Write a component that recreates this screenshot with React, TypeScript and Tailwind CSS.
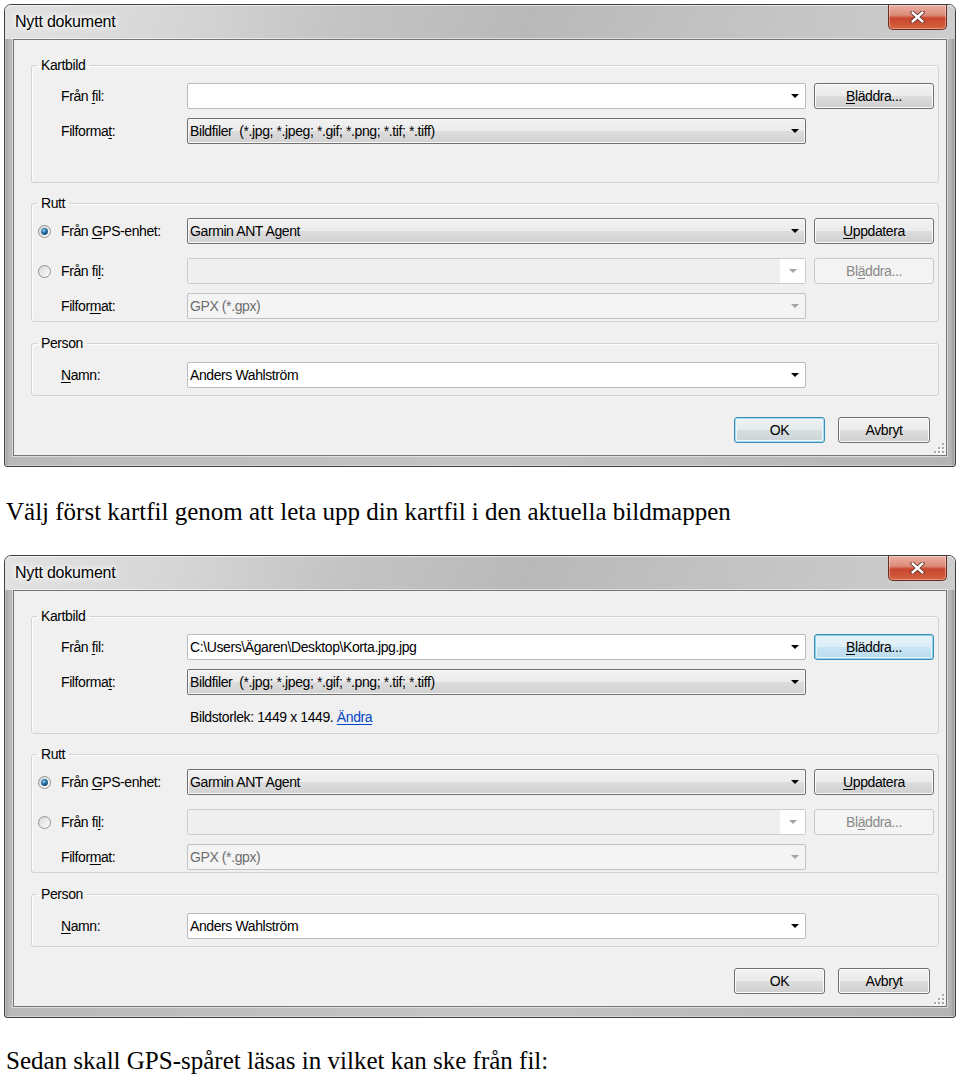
import React, { useId } from 'react';

const UI = "font-['Liberation_Sans',Arial,sans-serif] text-[14px] tracking-[-0.4px] text-black";

const Key: React.FC<{ children: React.ReactNode }> = ({ children }) => (
  <span className="underline decoration-1 underline-offset-[2px]">{children}</span>
);

const Arrow: React.FC<{ disabled?: boolean }> = ({ disabled }) => (
  <svg width="8" height="4" viewBox="0 0 8 4" className="shrink-0">
    <polygon points="0,0 8,0 4,4" fill={disabled ? '#a3a3a3' : '#000'} />
  </svg>
);

type ComboKind = 'edit' | 'list' | 'editDisabled' | 'listDisabled';

const Combo: React.FC<{ kind: ComboKind; children?: React.ReactNode }> = ({ kind, children }) => {
  if (kind === 'editDisabled') {
    return (
      <div className="flex h-full w-[619px] rounded-[2px] border border-[#c9cdd0]">
        <div className="flex-1 bg-[#efefef]" />
        <div className="flex w-[25px] items-center justify-center bg-white">
          <Arrow disabled />
        </div>
      </div>
    );
  }
  const styles: Record<string, string> = {
    edit: 'border-[#b9bcc1] bg-white',
    list: 'border-[#707070] bg-[linear-gradient(180deg,#f2f2f2_0%,#ebebeb_50%,#dddddd_50%,#d1d1d1_100%)] shadow-[inset_0_0_0_1px_#f8f8f8]',
    listDisabled: 'border-[#bfc3c6] bg-[#f4f4f4] text-[#6d6d6d]',
  };
  return (
    <div className={`flex h-full w-[619px] items-center justify-between rounded-[2px] border pl-[2px] pr-[6px] ${styles[kind]}`}>
      <span className="whitespace-pre">{children}</span>
      <Arrow disabled={kind === 'listDisabled'} />
    </div>
  );
};

type BtnKind = 'normal' | 'default' | 'focus' | 'disabled';

const Button: React.FC<{ kind?: BtnKind; className?: string; children: React.ReactNode }> = ({ kind = 'normal', className = '', children }) => {
  const styles: Record<BtnKind, string> = {
    normal: 'border-[#707070] bg-[linear-gradient(180deg,#f2f2f2_0%,#ebebeb_50%,#dddddd_50%,#cfcfcf_100%)] shadow-[inset_0_0_0_1px_#fbfbfb]',
    default: 'border-[#3c8db5] bg-[linear-gradient(180deg,#eef2f3_0%,#e6ebec_50%,#d8dfe1_50%,#cbd3d6_100%)] shadow-[inset_0_0_0_1px_#a9dcf1,inset_0_0_0_2px_#e9f6fc]',
    focus: 'border-[#3c8db5] bg-[linear-gradient(180deg,#e7f4fb_0%,#dcedf7_50%,#c9e5f4_50%,#b9dcef_100%)] shadow-[inset_0_0_0_1px_#8fd0ee,inset_0_0_0_2px_#e4f4fc]',
    disabled: 'border-[#c5c9cc] bg-[#f4f4f4] text-[#8a8a8a]',
  };
  return (
    <div className={`flex h-[26px] items-center justify-center rounded-[3px] border ${styles[kind]} ${className}`}>
      {children}
    </div>
  );
};

const Radio: React.FC<{ checked?: boolean }> = ({ checked }) => {
  const id = useId().replace(/:/g, '');
  return (
    <svg width="13" height="13" viewBox="0 0 13 13" className="shrink-0">
      <defs>
        <linearGradient id={`ring${id}`} x1="0" y1="0" x2="1" y2="1">
          <stop offset="0" stopColor="#d6d6d6" />
          <stop offset="1" stopColor="#ffffff" />
        </linearGradient>
        <radialGradient id={`dot${id}`} cx="0.4" cy="0.35" r="0.7">
          <stop offset="0" stopColor="#9fd3f0" />
          <stop offset="0.45" stopColor="#2a7ab0" />
          <stop offset="1" stopColor="#103e63" />
        </radialGradient>
      </defs>
      <circle cx="6.5" cy="6.5" r="6" fill={`url(#ring${id})`} stroke="#8f9294" strokeWidth="1" />
      {checked && <circle cx="6.5" cy="6.5" r="3.4" fill={`url(#dot${id})`} />}
    </svg>
  );
};

const Row: React.FC<{ radio?: 'on' | 'off'; label: React.ReactNode; children: React.ReactNode; button?: React.ReactNode }> = ({ radio, label, children, button }) => (
  <div className="flex h-[26px] items-center">
    <div className={`flex w-[155px] shrink-0 items-center ${radio ? 'pl-[6px]' : 'pl-[29px]'}`}>
      {radio && <Radio checked={radio === 'on'} />}
      <span className={radio ? 'ml-[10px]' : ''}>{label}</span>
    </div>
    {children}
    {button && <div className="ml-[8px]">{button}</div>}
  </div>
);

const GroupBox: React.FC<{ title: string; className?: string; children: React.ReactNode }> = ({ title, className = '', children }) => (
  <fieldset className={`rounded-[3px] border border-[#d0d3d5] shadow-[inset_1px_1px_0_#fcfcfc] ${className}`}>
    <legend className="ml-[5px] px-[4px] leading-[16px]">{title}</legend>
    {children}
  </fieldset>
);

const CloseButton: React.FC = () => (
  <div className="mr-[8px] flex h-[25px] w-[59px] items-center justify-center rounded-b-[5px] border border-t-0 border-[#6e2b20] bg-[linear-gradient(180deg,#eab0a3_0%,#dc8b78_42%,#c9462e_55%,#d4633f_100%)] shadow-[inset_0_0_0_1px_rgba(255,255,255,0.35)]">
    <svg width="15" height="12" viewBox="0 0 15 12">
      <path d="M2.5 1.5 L12.5 10.5 M12.5 1.5 L2.5 10.5" stroke="#5a2a22" strokeWidth="4.2" strokeLinecap="round" />
      <path d="M2.5 1.5 L12.5 10.5 M12.5 1.5 L2.5 10.5" stroke="#ffffff" strokeWidth="2.4" strokeLinecap="round" />
    </svg>
  </div>
);

const Grip: React.FC = () => (
  <svg width="11" height="11" viewBox="0 0 11 11" className="absolute bottom-[1px] right-[1px]">
    {[
      [8, 0],
      [8, 4],
      [4, 4],
      [8, 8],
      [4, 8],
      [0, 8],
    ].map(([x, y]) => (
      <g key={`${x}-${y}`}>
        <rect x={x + 1} y={y + 1} width="2" height="2" fill="#ffffff" />
        <rect x={x} y={y} width="2" height="2" fill="#a8a8a8" />
      </g>
    ))}
  </svg>
);

const Dialog: React.FC<{ second?: boolean }> = ({ second }) => (
  <div className={`ml-[4px] w-[952px] rounded-t-[7px] rounded-b-[3px] border border-[#3f3f3f] bg-[linear-gradient(90deg,#9a9a9a_0px,#b9b9b9_4px,#c4c4c4_50%,#b4b4b4_calc(100%-4px),#8f8f8f_100%)] shadow-[inset_0_0_0_1px_rgba(255,255,255,0.4)] ${UI}`}>
    <div className="flex h-[34px] items-start justify-between rounded-t-[6px] bg-[linear-gradient(100deg,#e2e2e2_0%,#d6d6d6_18%,#c4c4c4_35%,#b9b9b9_55%,#c2c2c2_75%,#cdcdcd_100%)] shadow-[inset_0_1px_0_rgba(255,255,255,0.6)]">
      <div className="pl-[10px] pt-[7px] text-[16px] leading-[20px] tracking-[-0.2px] [text-shadow:0_0_6px_#fff,0_0_10px_#fff,0_0_3px_#fff]">
        Nytt dokument
      </div>
      <CloseButton />
    </div>
    <div className="px-[8px] pb-[10px]">
      <div className="relative border border-[#767676] bg-[#f0f0f0] pb-[12px] pl-[17px] pr-[7px] pt-[17px] shadow-[0_0_0_1px_rgba(255,255,255,0.5)]">
        <GroupBox title="Kartbild">
          <div className="flex flex-col gap-[9px] pb-[3px] pt-[10px]">
            <Row
              label={<>Från <Key>f</Key>il:</>}
              button={<Button kind={second ? 'focus' : 'normal'} className="w-[120px]"><Key>B</Key>läddra...</Button>}
            >
              <Combo kind="edit">{second ? 'C:\\Users\\Ägaren\\Desktop\\Korta.jpg.jpg' : ''}</Combo>
            </Row>
            <Row label={<>Filforma<Key>t</Key>:</>}>
              <Combo kind="list">Bildfiler  (*.jpg; *.jpeg; *.gif; *.png; *.tif; *.tiff)</Combo>
            </Row>
            <div className="flex h-[26px] items-center pl-[158px]">
              {second && (
                <span>
                  Bildstorlek: 1449 x 1449. <span className="text-[#0645c8] underline underline-offset-[2px]">Ändra</span>
                </span>
              )}
            </div>
          </div>
        </GroupBox>

        <GroupBox title="Rutt" className="mt-[12px]">
          <div className="flex flex-col pb-[2px] pt-[7px]">
            <Row
              radio="on"
              label={<>Från <Key>G</Key>PS-enhet:</>}
              button={<Button className="w-[120px]"><Key>U</Key>ppdatera</Button>}
            >
              <Combo kind="list">Garmin ANT Agent</Combo>
            </Row>
            <div className="mt-[14px]">
              <Row
                radio="off"
                label={<>Från fi<Key>l</Key>:</>}
                button={<Button kind="disabled" className="w-[120px]">Bl<Key>ä</Key>ddra...</Button>}
              >
                <Combo kind="editDisabled" />
              </Row>
            </div>
            <div className="mt-[9px]">
              <Row label={<>Filfor<Key>m</Key>at:</>}>
                <Combo kind="listDisabled">GPX (*.gpx)</Combo>
              </Row>
            </div>
          </div>
        </GroupBox>

        <GroupBox title="Person" className="mt-[13px]">
          <div className="pb-[7px] pt-[11px]">
            <Row label={<><Key>N</Key>amn:</>}>
              <Combo kind="edit">Anders Wahlström</Combo>
            </Row>
          </div>
        </GroupBox>

        <div className="mr-[9px] mt-[21px] flex justify-end gap-[13px]">
          <Button kind={second ? 'normal' : 'default'} className="w-[91px]">OK</Button>
          <Button className="w-[92px]">Avbryt</Button>
        </div>
        <Grip />
      </div>
    </div>
  </div>
);

const SERIF = "pl-[6px] font-['Liberation_Serif','Times_New_Roman',serif] text-[25px] leading-[28px] text-black";

export default function App() {
  return (
    <div className="min-h-[1077px] w-[960px] bg-white pt-[4px]">
      <Dialog />
      <p className={`mt-[31px] ${SERIF}`}>Välj först kartfil genom att leta upp din kartfil i den aktuella bildmappen</p>
      <div className="mt-[29px]">
        <Dialog second />
      </div>
      <p className={`mt-[29px] ${SERIF}`}>Sedan skall GPS-spåret läsas in vilket kan ske från fil:</p>
    </div>
  );
}
